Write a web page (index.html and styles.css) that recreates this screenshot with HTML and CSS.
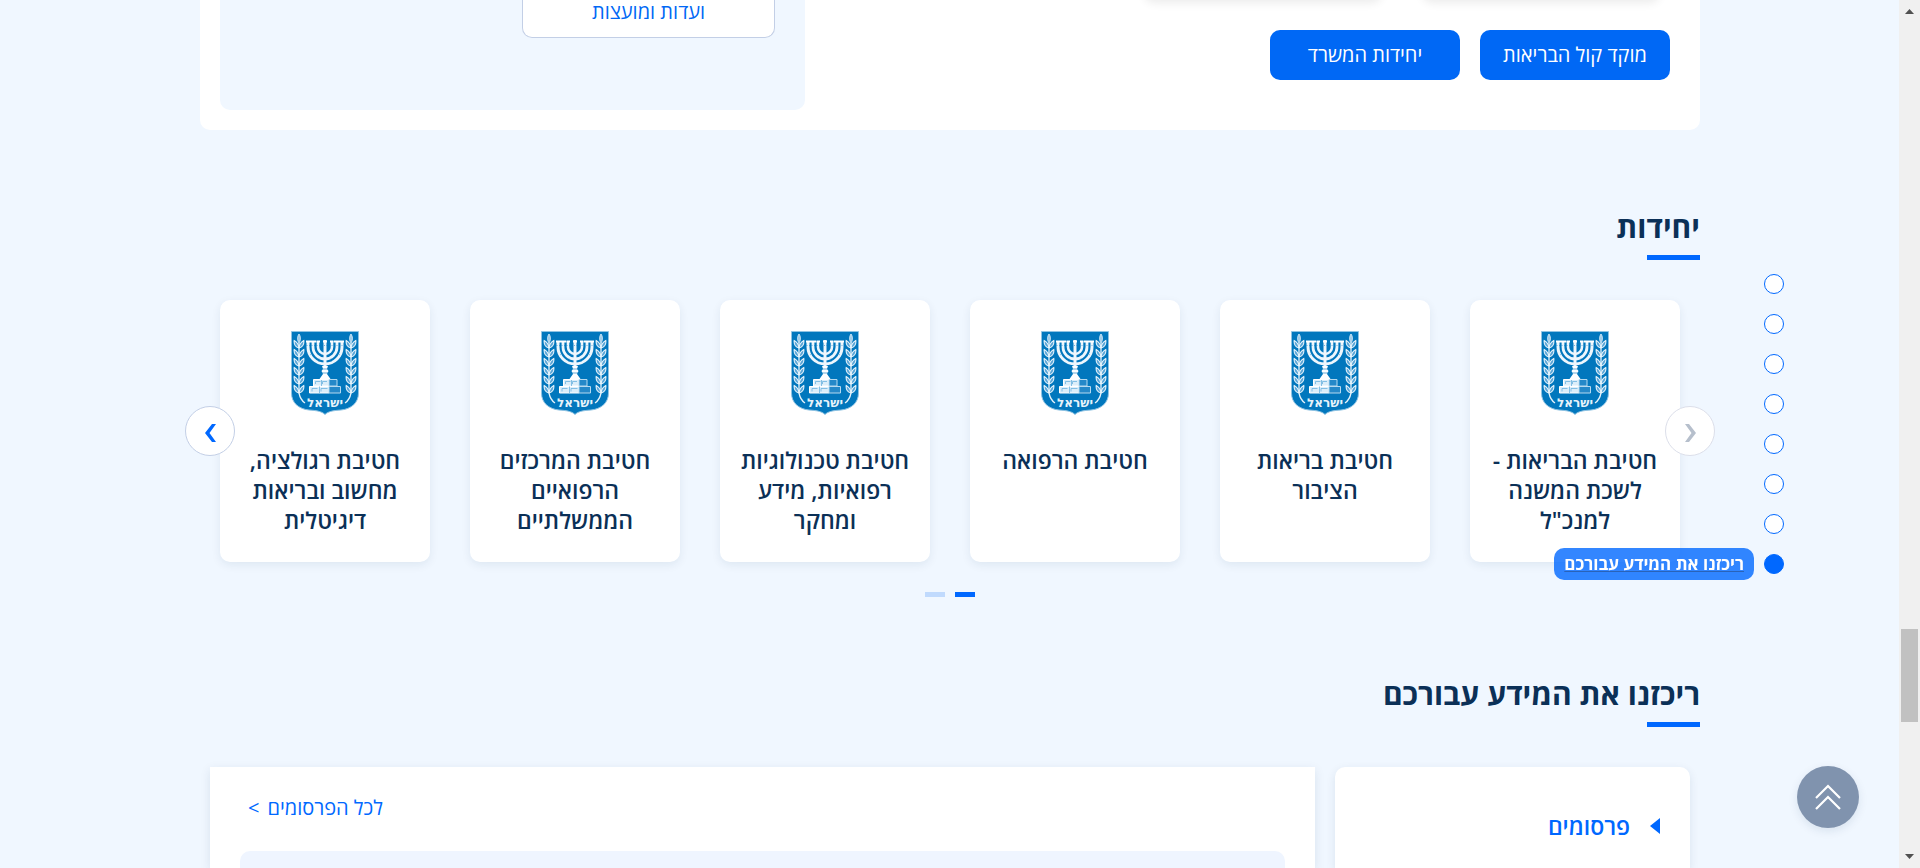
FILE: index.html
```html
<!DOCTYPE html>
<html lang="he" dir="rtl">
<head>
<meta charset="utf-8">
<title>משרד הבריאות</title>
<link rel="stylesheet" href="styles.css">
</head>
<body>
<svg class="defs" aria-hidden="true">
  <symbol id="leaves" viewBox="0 0 12 10">
    <path d="M6 9C2 8 .8 5 1.2 1.500C4 3 5.600 5 6 9C6.400 5 8 3 10.800 1.500C11.200 5 10 8 6 9Z" fill="#5aa5d6" stroke="#e6f3fb" stroke-width="1.100"/>
  </symbol>
  <symbol id="branch" viewBox="0 0 16 74">
    <path d="M6 3C4 6 4 9 6 12C8 9 8 6 6 3Z" fill="#9fcbe8" stroke="#e6f3fb" stroke-width=".8"/>
    <use href="#leaves" x="0" y="8" width="12" height="10"/>
    <use href="#leaves" x="0" y="17" width="12" height="10"/>
    <use href="#leaves" x="0" y="26" width="12" height="10"/>
    <use href="#leaves" x="0" y="35" width="12" height="10"/>
    <use href="#leaves" x="0" y="44" width="12" height="10"/>
    <use href="#leaves" x="0" y="53" width="12" height="10"/>
    <path d="M6 12V62C7 67 9 70 12 72" fill="none" stroke="#e6f3fb" stroke-width="1.300"/>
  </symbol>
  <symbol id="emblem" viewBox="0 0 68 84">
    <path d="M.5 .5H67.500V62C67.500 72 60 78 50 79C42 79.500 37 80.500 34 83.500C31 80.500 26 79.500 18 79C8 78 .5 72 .5 62Z" fill="#0277bd" stroke="#8fc3e3" stroke-width="1"/>
    <use href="#branch" x="2" y="0" width="16" height="74"/>
    <g transform="translate(68 0) scale(-1 1)"><use href="#branch" x="2" y="0" width="16" height="74"/></g>
    <g fill="none" stroke="#eef7fd" stroke-width="3">
      <path d="M17 10V16A17 17 0 0 0 51 16V10"/>
      <path d="M22 10V16A12 12 0 0 0 46 16V10" stroke-width="2.800"/>
      <path d="M27 10V16A7 7 0 0 0 41 16V10" stroke-width="2.600"/>
      <path d="M34 9V48"/>
    </g>
    <path d="M15 10.500H25M25.500 10.500H29M32 10.500H36M39 10.500H42.500M43 10.500H53" stroke="#fff" stroke-width="2"/>
    <path d="M15.500 14.500H52.500M19 24L22 22M49 24L46 22M28 31V27M40 31V27" stroke="#0277bd" stroke-width=".5" stroke-dasharray="1 1.500"/>
    <path d="M31 35H37L36 38L37.500 40L36 43L39.500 48H28.500L32 43L30.500 40L32 38Z" fill="#fff"/>
    <path d="M31.500 38H36.500M31 42H37" stroke="#0277bd" stroke-width=".6"/>
    <path d="M22.500 48.500H38V55H22.500ZM18.500 55.500H38V62H18.500Z" fill="#dceefa" stroke="#fff" stroke-width="1"/>
    <path d="M38 48.500H46V55H38ZM38 55.500H49.500V62H38Z" fill="#2488c8" stroke="#b5d9ef" stroke-width="1"/>
    <path d="M24.500 53V50.500H29.500M31.500 53V50.500H36M21 60.500V57.500H26.500M30 60.500V57.500H36.500M28.500 55.500V62M30.500 49V55" fill="none" stroke="#6db2de" stroke-width=".8"/>
    <text x="34" y="76" class="emblem-text" direction="rtl">ישראל</text>
  </symbol>
</svg>

<main class="page">
  <section class="panel">
    <div class="panel-main">
      <div class="tiles"><div class="tile"></div><div class="tile"></div></div>
      <div class="actions">
        <a class="btn" href="#">מוקד קול הבריאות</a>
        <a class="btn" href="#">יחידות המשרד</a>
      </div>
    </div>
    <div class="panel-side">
      <a class="outline-link" href="#">ועדות ומועצות</a>
    </div>
  </section>

  <section class="units">
    <h2 class="title">יחידות</h2>
    <div class="carousel">
      <ul class="cards">
        <li><a class="card" href="#"><svg class="emblem"><use href="#emblem"/></svg><span>חטיבת הבריאות - לשכת המשנה למנכ"ל</span></a></li>
        <li><a class="card" href="#"><svg class="emblem"><use href="#emblem"/></svg><span>חטיבת בריאות הציבור</span></a></li>
        <li><a class="card" href="#"><svg class="emblem"><use href="#emblem"/></svg><span>חטיבת הרפואה</span></a></li>
        <li><a class="card" href="#"><svg class="emblem"><use href="#emblem"/></svg><span>חטיבת טכנולוגיות רפואיות, מידע ומחקר</span></a></li>
        <li><a class="card" href="#"><svg class="emblem"><use href="#emblem"/></svg><span>חטיבת המרכזים הרפואיים הממשלתיים</span></a></li>
        <li><a class="card" href="#"><svg class="emblem"><use href="#emblem"/></svg><span>חטיבת רגולציה, מחשוב ובריאות דיגיטלית</span></a></li>
      </ul>
      <button class="arrow arrow-prev" type="button" aria-label="הקודם" disabled><svg width="11" height="18" viewBox="0 0 11 18"><path d="M0 0H4L11 9L4 18H0L6.500 9Z" fill="currentColor"/></svg></button>
      <button class="arrow arrow-next" type="button" aria-label="הבא"><svg width="11" height="18" viewBox="0 0 11 18"><path d="M11 0H7L0 9L7 18H11L4.500 9Z" fill="currentColor"/></svg></button>
    </div>
    <div class="pager">
      <button class="page-mark current" type="button" aria-label="עמוד 1"></button>
      <button class="page-mark" type="button" aria-label="עמוד 2"></button>
    </div>
  </section>

  <section class="info">
    <h2 class="title">ריכזנו את המידע עבורכם</h2>
    <div class="info-grid">
      <nav class="info-tabs">
        <a class="tab" href="#"><svg width="10" height="16" viewBox="0 0 10 16"><path d="M10 0V16L0 8Z" fill="currentColor"/></svg>פרסומים</a>
      </nav>
      <div class="info-content">
        <a class="all-link" href="#"><span>לכל הפרסומים</span><span>&gt;</span></a>
        <div class="info-list"></div>
      </div>
    </div>
  </section>
</main>

<nav class="side-nav">
  <a class="dot" href="#" aria-label="1"></a>
  <a class="dot" href="#" aria-label="2"></a>
  <a class="dot" href="#" aria-label="3"></a>
  <a class="dot" href="#" aria-label="4"></a>
  <a class="dot" href="#" aria-label="5"></a>
  <a class="dot" href="#" aria-label="6"></a>
  <a class="dot" href="#" aria-label="7"></a>
  <a class="dot active" href="#"><span class="tip">ריכזנו את המידע עבורכם</span></a>
</nav>

<button class="to-top" type="button" aria-label="חזרה למעלה"><svg width="26" height="26" viewBox="0 0 26 26"><path d="M1 14L13 2L25 14M1 25L13 13L25 25" fill="none" stroke="#fff" stroke-width="2.200"/></svg></button>

<div class="scrollbar" aria-hidden="true">
  <svg width="9" height="5" viewBox="0 0 9 5"><path d="M0 5L4.500 0L9 5Z" fill="#505050"/></svg>
  <div class="track"><div class="thumb"></div></div>
  <svg width="9" height="5" viewBox="0 0 9 5"><path d="M0 0L4.500 5L9 0Z" fill="#505050"/></svg>
</div>
</body>
</html>
```
FILE: styles.css
```css
* { box-sizing: border-box; }

body {
  margin: 0;
  height: 100vh;
  overflow: hidden;
  padding-right: 20px;
  background: #f0f7ff;
  color: #0b3057;
  font-family: "Open Sans", "DejaVu Sans", sans-serif;
}

a { color: inherit; text-decoration: none; }
button { padding: 0; border: 0; font: inherit; cursor: pointer; }
.defs { position: absolute; width: 0; height: 0; }

.page {
  display: flex;
  flex-direction: column;
  max-width: 1500px;
  height: 100%;
  margin: 0 auto;
}

.panel {
  display: flex;
  justify-content: space-between;
  padding: 0 30px 20px 20px;
  background: #fff;
  border-radius: 0 0 10px 10px;
}
.tiles { display: flex; gap: 40px; height: 20px; margin-top: -20px; padding-right: 10px; }
.tile { width: 238px; border-radius: 10px; background: #fff; box-shadow: 0 3px 10px rgba(0, 0, 0, .08); }
.actions { display: flex; gap: 20px; margin-top: 30px; }
.btn {
  display: flex;
  align-items: center;
  justify-content: center;
  width: 190px;
  height: 50px;
  padding-bottom: 2px;
  border-radius: 10px;
  background: #0068f5;
  color: #fff;
  font-size: 20px;
}
.panel-side {
  width: 585px;
  height: 110px;
  padding: 0 30px;
  background: #f0f7ff;
  border-radius: 0 0 10px 10px;
}
.outline-link {
  display: flex;
  align-items: center;
  justify-content: center;
  width: 253px;
  height: 38px;
  padding-bottom: 14px;
  border: 1px solid #c3cfe6;
  border-top: 0;
  border-radius: 0 0 10px 10px;
  background: #fff;
  color: #0068f5;
  font-size: 20px;
}

.title {
  margin: 0;
  font-size: 30px;
  font-weight: 700;
  line-height: 40px;
}
.title::after {
  content: "";
  display: block;
  width: 53px;
  height: 5px;
  margin-top: 8px;
  background: #0068ff;
}
.units { padding-top: 77px; }

.carousel { position: relative; margin-top: 40px; }
.cards {
  display: grid;
  grid-template-columns: repeat(6, 1fr);
  gap: 40px;
  margin: 0;
  padding: 0 20px;
  list-style: none;
}
.card {
  display: flex;
  flex-direction: column;
  align-items: center;
  gap: 30px;
  height: 100%;
  min-height: 262px;
  padding: 31px 20px 24px;
  border-radius: 10px;
  background: #fff;
  box-shadow: 0 3px 10px rgba(11, 48, 87, .08);
  text-align: center;
  font-size: 23px;
  font-weight: 600;
  line-height: 30px;
}
.emblem { flex: none; width: 68px; height: 84px; }
.emblem-text {
  fill: #e6f3fb;
  font-family: "DejaVu Sans", sans-serif;
  font-size: 12px;
  text-anchor: middle;
}
.arrow {
  position: absolute;
  top: 106px;
  display: flex;
  align-items: center;
  justify-content: center;
  width: 50px;
  height: 50px;
  padding-top: 3px;
  border: 1px solid #c3cfe6;
  border-radius: 50%;
  background: #fff;
  color: #0068ff;
}
.arrow-prev { right: -15px; border-color: #dcdfea; color: #b6bfcc; }
.arrow-next { left: -15px; }

.pager { display: flex; justify-content: center; gap: 10px; margin-top: 30px; }
.page-mark { width: 20px; height: 5px; background: #c0dafd; }
.page-mark.current { background: #0068ff; }

.info { display: flex; flex: 1; flex-direction: column; padding-top: 77px; }
.info-grid {
  display: grid;
  flex: 1;
  grid-template-columns: 355px 1fr;
  gap: 20px;
  margin: 40px 10px 0;
}
.info-tabs, .info-content { background: #fff; box-shadow: 0 3px 10px rgba(11, 48, 87, .1); }
.info-tabs { padding: 44px 30px 0; border-radius: 10px 10px 0 0; }
.tab {
  display: flex;
  align-items: center;
  gap: 20px;
  color: #0068ff;
  font-size: 23px;
  font-weight: 600;
  line-height: 30px;
}
.info-content { display: flex; flex-direction: column; padding: 26px 30px 0; }
.all-link {
  display: flex;
  align-self: flex-end;
  gap: 8px;
  margin-left: 8px;
  color: #0068ff;
  font-size: 20px;
  line-height: 30px;
}
.info-list { flex: 1; margin-top: 28px; border-radius: 10px 10px 0 0; background: #eff5ff; }

.side-nav {
  position: fixed;
  top: 274px;
  right: 136px;
  display: flex;
  flex-direction: column;
  gap: 20px;
}
.dot {
  position: relative;
  width: 20px;
  height: 20px;
  border: 1px solid #0068ff;
  border-radius: 50%;
  background: #fff;
}
.dot.active { background: #0068ff; }
.tip {
  position: absolute;
  top: -7px;
  right: 29px;
  padding: 0 10px;
  border-radius: 10px;
  background: rgba(0, 104, 255, .8);
  color: #fff;
  font-size: 17px;
  font-weight: 700;
  line-height: 32px;
  white-space: nowrap;
  text-decoration: underline 1px #2a63b8;
}

.to-top {
  position: fixed;
  right: 61px;
  bottom: 40px;
  display: flex;
  align-items: center;
  justify-content: center;
  width: 62px;
  height: 62px;
  border-radius: 50%;
  background: #8093ae;
  box-shadow: 0 3px 10px rgba(11, 48, 87, .1);
}

.scrollbar {
  position: fixed;
  top: 0;
  right: 0;
  bottom: 0;
  display: flex;
  flex-direction: column;
  align-items: center;
  gap: 7px;
  width: 21px;
  padding: 9px 0;
  background: #f0f0f0;
}
.track { display: flex; flex: 1; flex-direction: column; }
.track::before { content: ""; flex: 608; }
.track::after { content: ""; flex: 125; }
.thumb { flex: 93; width: 17px; background: #c1c1c1; }
```
